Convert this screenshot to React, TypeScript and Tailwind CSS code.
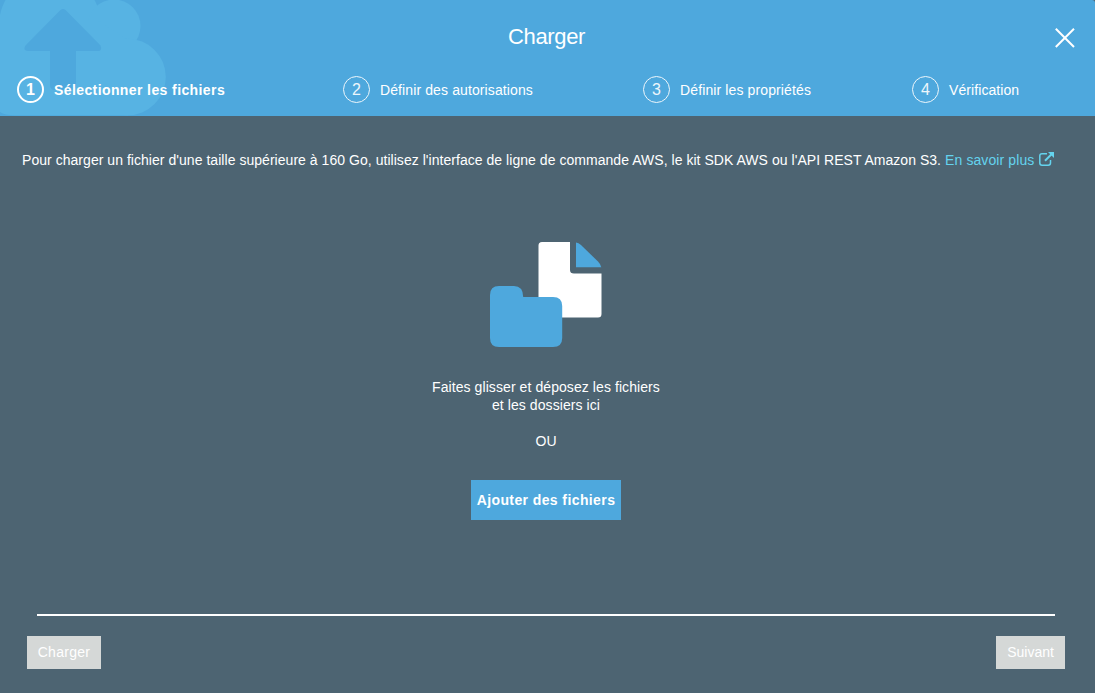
import React from "react";

type StepProps = { n: number; label: string; active?: boolean; className: string; labelClass: string };

function Step({ n, label, active, className, labelClass }: StepProps) {
  return (
    <li className={`flex items-center ${className}`}>
      <span
        className={`flex h-[27px] w-[27px] shrink-0 items-center justify-center rounded-full border-white ${
          active ? "border-2 text-[16px] font-bold" : "border-[1.5px] text-[16px] opacity-90"
        }`}
      >
        {n}
      </span>
      <span className={`ml-[10px] whitespace-nowrap ${active ? "font-bold" : ""} ${labelClass}`}>{label}</span>
    </li>
  );
}

function CloudMark() {
  return (
    <svg className="absolute left-0 top-0" width="170" height="116" viewBox="0 0 170 116" aria-hidden="true">
      <g fill="#57b3e3">
        <circle cx="50" cy="25" r="51" />
        <circle cx="114" cy="26" r="26.500" />
        <circle cx="127.500" cy="77" r="38.300" />
        <path d="M0 20H97L128 40V115.300H14Q5 115.300 0 112Z" />
      </g>
      <path
        d="M60.500 10Q63 8 65.500 10L100.500 45.500Q102.500 51 98 51H76V85Q76 90 71 90H55Q50 90 50 85V51H28Q22.500 50.500 25.500 45.500Z"
        fill="#4ea8dd"
      />
    </svg>
  );
}

function FilesIcon() {
  return (
    <svg width="112" height="106" viewBox="490 242 112 106" aria-hidden="true">
      <path d="M542 242H570V270Q570 273.500 574 273.500H601.500V314Q601.500 317.600 598 317.600H538.500V245.500Q538.500 242 542 242Z" fill="#fff" />
      <path d="M576 242.500Q578.500 242.700 581 245L598 261.500Q600.500 264 601.300 267.200H576Z" fill="#4ea8dd" />
      <path
        d="M499 286H514Q523 286 523.200 297H553Q562.200 297 562.200 306V338Q562.200 347 553 347H499Q490 347 490 338V295Q490 286 499 286Z"
        fill="#4ea8dd"
      />
    </svg>
  );
}

function ExternalIcon() {
  return (
    <svg className="-mt-[2px] ml-[5px]" width="15" height="14" viewBox="0 0 15 14" fill="none" aria-hidden="true">
      <path d="M8 1.700H3Q.8 1.700 .8 4V11Q.8 13.200 3 13.200H9.200Q11.500 13.200 11.500 11V8" stroke="#64d3ee" strokeWidth="1.500" />
      <path d="M6 8.700L12.500 2.200" stroke="#64d3ee" strokeWidth="2" />
      <path d="M9 0H15V6Z" fill="#64d3ee" />
    </svg>
  );
}

export default function App() {
  return (
    <div className="flex h-[693px] w-[1095px] flex-col overflow-hidden bg-[#4d6472] font-['Liberation_Sans',Arial,sans-serif] text-[14px] leading-[18px] text-white">
      <header className="relative h-[116px] shrink-0 overflow-hidden rounded-tr-[3px] bg-[#4ea8dd]">
        <CloudMark />
        <div className="relative flex h-[76px] items-center pl-[508px] pr-[19px]">
          <h1 className="-mt-[3px] text-[22px] leading-[26px] tracking-[-0.34px]">Charger</h1>
          <button className="ml-auto" aria-label="Fermer">
            <svg width="22" height="22" viewBox="0 0 22 22" stroke="#fff" strokeWidth="2" aria-hidden="true">
              <path d="M1.800 1.800L20 20M20 1.800L1.800 20" />
            </svg>
          </button>
        </div>
        <ol className="relative flex h-[27px]">
          <Step n={1} label="Sélectionner les fichiers" active className="ml-[17px] w-[326px]" labelClass="tracking-[0.4px]" />
          <Step n={2} label="Définir des autorisations" className="w-[300px]" labelClass="tracking-[0.11px]" />
          <Step n={3} label="Définir les propriétés" className="w-[269px]" labelClass="tracking-[0.12px]" />
          <Step n={4} label="Vérification" className="" labelClass="tracking-[0.08px]" />
        </ol>
      </header>
      <main className="flex flex-col">
        <p className="ml-[22px] mt-[35px] flex items-center whitespace-nowrap">
          <span className="tracking-[0.04px]">Pour charger un fichier d'une taille supérieure à 160 Go, utilisez l'interface de ligne de commande AWS, le kit SDK AWS ou l'API REST Amazon S3.</span>
          <a className="ml-1 flex items-center text-[#64d3ee]">
            <span className="tracking-[0.1px]">En savoir plus</span>
            <ExternalIcon />
          </a>
        </p>
        <section className="mt-[73px] flex w-[1092px] flex-col items-center text-center">
          <FilesIcon />
          <p className="mt-[30px] tracking-[0.08px]">
            Faites glisser et déposez les fichiers
            <br />
            et les dossiers ici
          </p>
          <p className="mt-[18px]">OU</p>
          <button className="mt-[30px] h-10 w-[150px] whitespace-nowrap bg-[#4ea8dd] font-bold tracking-[0.4px]">Ajouter des fichiers</button>
        </section>
      </main>
      <footer className="mt-[94px]">
        <div className="ml-[37px] h-[2px] w-[1018px] bg-white" />
        <div className="mt-5 flex justify-between pl-[27px] pr-[30px]">
          <button className="h-[33px] w-[74px] bg-[#d5d8d7] pb-[2px] tracking-[0.3px]">Charger</button>
          <button className="h-[33px] w-[69px] bg-[#d5d8d7] pb-[2px]">Suivant</button>
        </div>
      </footer>
    </div>
  );
}
